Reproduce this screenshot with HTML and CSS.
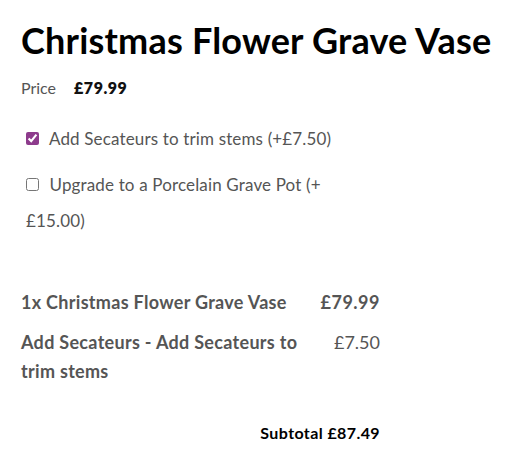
FILE: index.html
```html
<!DOCTYPE html>
<html lang="en">
<head>
    <meta charset="UTF-8">
    <meta name="viewport" content="width=device-width, initial-scale=1.0">
    <title>Christmas Flower Grave Vase</title>
    <link rel="stylesheet" href="styles.css">
</head>
<body>
<div class="product">
    <h1 class="product-title">Christmas Flower Grave Vase</h1>

    <div class="price-row">
        <span class="price-label">Price</span>
        <span class="price-value">£79.99</span>
    </div>

    <!-- Optional add-ons -->
    <div class="addons">
        <label class="addon">
            <input type="checkbox" checked>
            Add Secateurs to trim stems (+£7.50)
        </label>
        <label class="addon">
            <input type="checkbox">
            Upgrade to a Porcelain Grave Pot (+ £15.00)
        </label>
    </div>

    <div class="summary">
        <div class="summary-line">
            <span class="line-name">1x Christmas Flower Grave Vase</span>
            <span class="line-price strong">£79.99</span>
        </div>
        <div class="summary-line">
            <span class="line-name">Add Secateurs - Add Secateurs to trim stems</span>
            <span class="line-price">£7.50</span>
        </div>
        <div class="subtotal">Subtotal £87.49</div>
    </div>
</div>
</body>
</html>
```

FILE: styles.css
```css
body {
    margin: 0;
    font-family: Lato, "Liberation Sans", sans-serif;
    color: #555;
    background: #fff;
}
.product {
    padding: 14px 21px;
}
.product-title {
    font-family: Lato, sans-serif;
    font-weight: 700;
    font-size: 36px;
    letter-spacing: 0.2px;
    color: #000;
    margin: 0 0 12px 0;
    line-height: 52px;
}
.price-row {
    display: flex;
    gap: 18px;
    font-size: 16px;
    align-items: baseline;
}
.price-value {
    color: #111;
    font-weight: 800;
    letter-spacing: 0.5px;
}
.addons {
    margin-top: 24px;
    width: 330px;
}
.addon {
    display: block;
    font-size: 17px;
    letter-spacing: 0.15px;
    line-height: 36px;
    padding-left: 5px;
    margin-bottom: 10px;
}
.addon input {
    accent-color: #8d3b8c;
    margin: 0 6px 0 0;
    width: 13px;
    height: 13px;
}
.summary {
    width: 359px;
    margin-top: 49px;
}
.summary-line {
    display: flex;
    justify-content: space-between;
    gap: 24px;
    font-size: 18px;
    line-height: 29px;
    margin-bottom: 11px;
}
.line-name {
    font-weight: 700;
    letter-spacing: 0.3px;
}
.line-price {
    white-space: nowrap;
}
.line-price.strong {
    font-weight: 700;
    letter-spacing: 0.5px;
}
.subtotal {
    text-align: right;
    color: #000;
    font-weight: 700;
    font-size: 16px;
    letter-spacing: 0.4px;
    margin-top: 37px;
}
```
